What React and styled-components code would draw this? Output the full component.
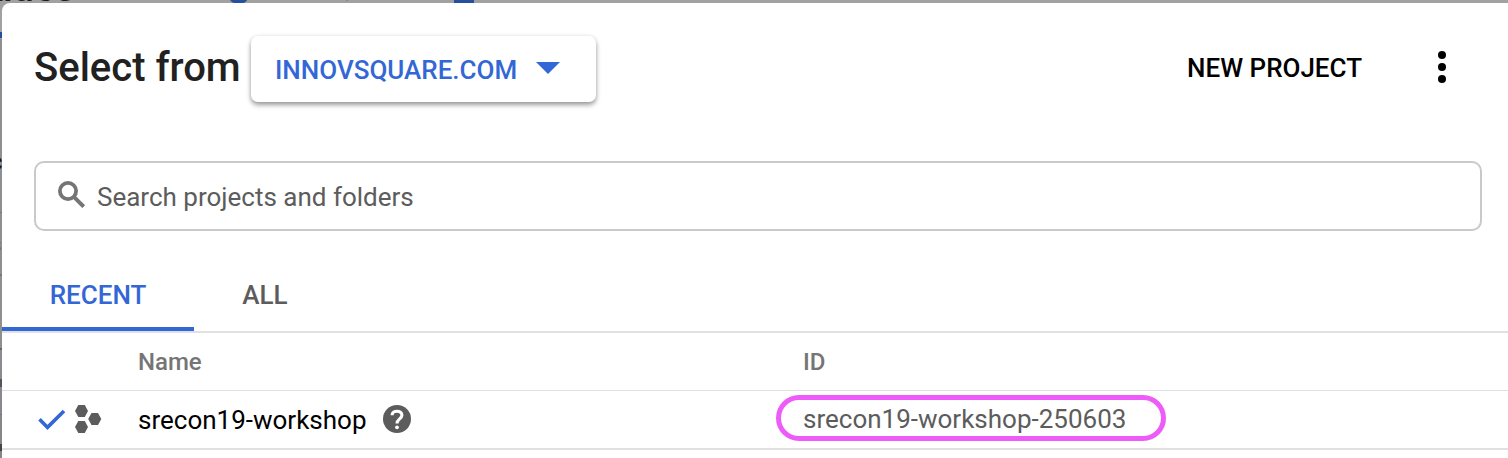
import React from "react";
import styled, { createGlobalStyle } from "styled-components";

const GlobalStyle = createGlobalStyle`
  * { box-sizing: border-box; }
  body { margin: 0; overflow: hidden; font-family: Roboto, "Liberation Sans", sans-serif; }
`;

const Page = styled.div`
  position: relative;
  height: 458px;
  padding: 3px 0 0 2px;
  overflow: hidden;
  background: linear-gradient(#a1a1a1 0 39px, #8f8f8f 39px 330px, #858a90 380px, #858585 458px);
`;

const Backdrop = styled.div`
  position: absolute;
  inset: 0;
  overflow: hidden;
`;

const BackdropText = styled.span`
  position: absolute;
  left: ${(p) => p.$x}px;
  top: ${(p) => p.$y}px;
  font-size: ${(p) => p.$size}px;
  line-height: 1;
  font-weight: 500;
  white-space: nowrap;
  color: ${(p) => p.$color || "#1c1c1c"};
`;

const BackdropMark = styled.span`
  position: absolute;
  left: ${(p) => p.$x}px;
  top: ${(p) => p.$y}px;
  width: ${(p) => p.$w}px;
  height: ${(p) => p.$h}px;
  background: ${(p) => p.$color || "#777"};
`;

const Dialog = styled.section`
  position: relative;
  height: 455px;
  background: #fff;
  border-top-left-radius: 8px;
`;

const Header = styled.header`
  display: flex;
  align-items: flex-start;
  height: 158px;
  padding: 33px 62px 0 32px;
`;

const Title = styled.h1`
  width: 217px;
  margin: 8px 0 0;
  font-size: 40px;
  line-height: 48px;
  font-weight: 500;
  white-space: nowrap;
  color: #212121;
`;

const OrgButton = styled.button`
  display: flex;
  align-items: center;
  justify-content: space-between;
  width: 345px;
  height: 66px;
  margin-right: auto;
  padding: 2px 36px 0 24px;
  border: 0;
  border-radius: 7px;
  background: #fff;
  box-shadow: 0 3px 5px rgba(0, 0, 0, 0.38), 0 0 4px rgba(0, 0, 0, 0.08);
  color: #3367d6;
  font: 500 26px/30px Roboto, sans-serif;
  white-space: nowrap;
`;

const Caret = styled.svg`
  width: 24px;
  height: 12px;
  margin-top: -4px;
`;

const TextButton = styled.button`
  margin-top: 17px;
  padding: 0;
  border: 0;
  background: none;
  color: #000;
  font: 500 26px/30px Roboto, sans-serif;
  white-space: nowrap;
`;

const MoreButton = styled.button`
  display: flex;
  margin: 15px 0 0 76px;
  padding: 0;
  border: 0;
  background: none;
`;

const SearchBox = styled.label`
  display: flex;
  height: 70px;
  margin: 0 26px 0 32px;
  padding: 13px 0 0 18px;
  border: 2px solid #c9c9c9;
  border-radius: 10px;
`;

const SearchText = styled.span`
  margin: 6px 0 0 7px;
  font-size: 26px;
  line-height: 30px;
  color: #5c5c5c;
`;

const Tabs = styled.nav`
  display: flex;
  height: 102px;
  padding-top: 26px;
  border-bottom: 2px solid #e0e0e0;
`;

const Tab = styled.button`
  width: ${(p) => p.$width}px;
  padding: 6px 0 0;
  border: 0;
  border-bottom: 4px solid ${(p) => (p.$active ? "#3367d6" : "transparent")};
  background: none;
  color: ${(p) => (p.$active ? "#3367d6" : "#5c5c5c")};
  font: 500 26px/30px Roboto, sans-serif;
`;

const Row = styled.div`
  display: grid;
  grid-template-columns: 136px 665px 1fr;
  align-items: start;
`;

const HeadRow = styled(Row)`
  height: 58px;
  padding-top: 15px;
  border-bottom: 1px solid #e0e0e0;
  font-size: 24px;
  line-height: 28px;
  font-weight: 500;
  color: #757575;
`;

const ProjectRow = styled(Row)`
  height: 59px;
  border-bottom: 2px solid #e0e0e0;
  font-size: 26px;
  line-height: 30px;
`;

const Status = styled.div`
  display: flex;
  padding: 14px 0 0 36px;
  gap: 9px;
`;

const ProjectName = styled.div`
  display: flex;
  gap: 16px;
  padding-top: 14px;
  color: #000;
`;

const ProjectId = styled.div`
  justify-self: start;
  width: 390px;
  height: 46px;
  margin: 4px 0 0 -27px;
  padding: 4px 0 0 22px;
  border: 5px solid #ed5bf8;
  border-radius: 23px;
  color: #5c5c5c;
`;

export default function App() {
  return (
    <>
      <GlobalStyle />
      <Page>
        <Backdrop aria-hidden="true">
          <BackdropText $x={-9} $y={-31} $size={39}>ades</BackdropText>
          <BackdropText $x={226} $y={-33} $size={44} $color="#264f9e">o</BackdropText>
          <BackdropMark $x={454} $y={0} $w={20} $h={3} $color="#264f9e" />
          <BackdropMark $x={346} $y={0} $w={2} $h={1} $color="#7f86a0" />
          <BackdropMark $x={0} $y={32} $w={2} $h={6} $color="#264f9e" />
          <BackdropText $x={-10} $y={150} $size={24}>c</BackdropText>
          <BackdropMark $x={0} $y={212} $w={2} $h={1} />
          <BackdropText $x={-10} $y={234} $size={22} $color="#555">s</BackdropText>
          <BackdropMark $x={0} $y={274} $w={2} $h={2} />
          <BackdropMark $x={0} $y={348} $w={2} $h={2} $color="#666" />
          <BackdropMark $x={0} $y={379} $w={2} $h={8} $color="#555" />
          <BackdropMark $x={0} $y={414} $w={2} $h={1} />
          <BackdropMark $x={0} $y={444} $w={2} $h={7} $color="#444" />
        </Backdrop>
        <Dialog>
          <Header>
            <Title>Select from</Title>
            <OrgButton>
              INNOVSQUARE.COM
              <Caret viewBox="0 0 24 12"><path d="M0 0h24L12 12z" fill="#3367d6" /></Caret>
            </OrgButton>
            <TextButton>NEW PROJECT</TextButton>
            <MoreButton aria-label="More options">
              <svg width="8" height="32" viewBox="0 0 8 32">
                <circle cx="4" cy="4" r="4" /><circle cx="4" cy="16" r="4" /><circle cx="4" cy="28" r="4" />
              </svg>
            </MoreButton>
          </Header>
          <SearchBox>
            <svg width="36" height="37" viewBox="0 0 36 37" fill="none" stroke="#757575">
              <circle cx="14" cy="15" r="8.1" strokeWidth="3.8" />
              <path d="M19.4 20.4L29.7 30.7" strokeWidth="4" />
            </svg>
            <SearchText>Search projects and folders</SearchText>
          </SearchBox>
          <Tabs>
            <Tab $active $width={192}>RECENT</Tab>
            <Tab $width={142}>ALL</Tab>
          </Tabs>
          <HeadRow>
            <span />
            <span>Name</span>
            <span>ID</span>
          </HeadRow>
          <ProjectRow>
            <Status>
              <svg width="28" height="28" viewBox="0 0 28 28" fill="none" stroke="#3367d6" strokeWidth="3.6">
                <path d="M1.5 14.2l8 8.2L26 6" />
              </svg>
              <svg width="27" height="28" viewBox="0 0 27 28" fill="#5c5c5c">
                <path d="M3.3 0h6.5L13 6l-3.2 6H3.3L0 6zM3.3 16h6.5l3.2 6-3.2 6H3.3L0 22zM16.5 8H23l3.3 6-3.3 6h-6.5l-3.3-6z" />
              </svg>
            </Status>
            <ProjectName>
              srecon19-workshop
              <svg width="28" height="28" viewBox="0 0 28 28" fill="none">
                <circle cx="14" cy="14" r="14" fill="#5c5c5c" />
                <path d="M9.1 10.2c0-2.5 2.1-4 4.9-4s4.9 1.5 4.9 4.1c0 3.5-4.9 3.8-4.9 8.1" stroke="#fff" strokeWidth="3.1" />
                <circle cx="14" cy="22.3" r="1.9" fill="#fff" />
              </svg>
            </ProjectName>
            <ProjectId>srecon19-workshop-250603</ProjectId>
          </ProjectRow>
        </Dialog>
      </Page>
    </>
  );
}
